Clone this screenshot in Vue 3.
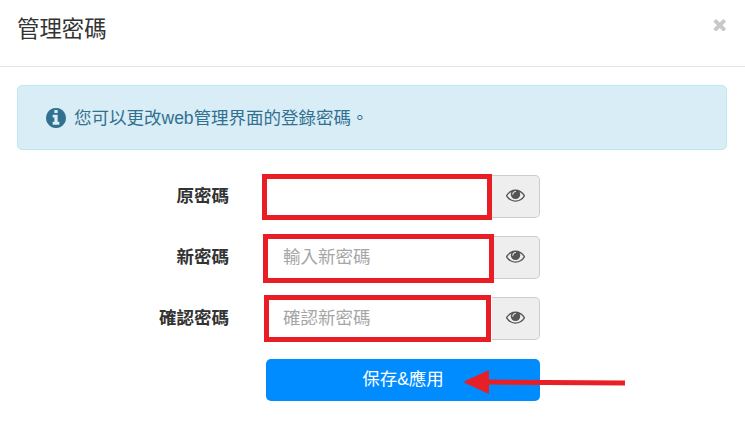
<script setup>
const rows = [
  { label: '原密碼', placeholder: '' },
  { label: '新密碼', placeholder: '輸入新密碼' },
  { label: '確認密碼', placeholder: '確認新密碼' }
]
const eye = 'M1664 960q-152-236-381-353 61 104 61 225 0 185-131.500 316.500t-316.500 131.500-316.500-131.500-131.500-316.500q0-121 61-225-229 117-381 353 133 205 333.500 326.500t434.500 121.500 434.500-121.500 333.500-326.500zm-720-384q0-20-14-34t-34-14q-125 0-214.500 89.500t-89.500 214.500q0 20 14 34t34 14 34-14 14-34q0-86 61-147t147-61q20 0 34-14t14-34zm848 384q0 34-20 69-140 230-376.500 368.500t-499.500 138.500-499.500-139-376.500-368q-20-35-20-69t20-69q140-229 376.500-368t499.500-139 499.500 139 376.500 368q20 35 20 69z'
const marks = [
  { name: 'm1' },
  { name: 'm2' },
  { name: 'm3' }
]
</script>

<template>
  <div class="modal">
    <header class="head">
      <h4 class="title">管理密碼</h4>
      <svg class="close" viewBox="254 254 1236 1272" aria-label="close">
        <path d="M1490 1322q0 40-28 68l-136 136q-28 28-68 28t-68-28l-294-294-294 294q-28 28-68 28t-68-28l-136-136q-28-28-28-68t28-68l294-294-294-294q-28-28-28-68t28-68l136-136q28-28 68-28t68 28l294 294 294-294q28-28 68-28t68 28l136 136q28 28 28 68t-28 68l-294 294 294 294q28 28 28 68z" />
      </svg>
    </header>

    <main class="body">
      <div class="alert">
        <svg class="info" viewBox="128 128 1536 1536">
          <path d="M1152 1376v-160q0-14-9-23t-23-9h-96v-512q0-14-9-23t-23-9h-320q-14 0-23 9t-9 23v160q0 14 9 23t23 9h96v320h-96q-14 0-23 9t-9 23v160q0 14 9 23t23 9h448q14 0 23-9t9-23zm-128-896v-160q0-14-9-23t-23-9h-192q-14 0-23 9t-9 23v160q0 14 9 23t23 9h192q14 0 23-9t9-23zm640 416q0 209-103 385.500t-279.500 279.500-385.500 103-385.500-103-279.500-279.500-103-385.500 103-385.500 279.500-279.500 385.500-103 385.500 103 279.500 279.500 103 385.500z" />
        </svg>
        <span class="alert-text">您可以更改web管理界面的登錄密碼。</span>
      </div>

      <form class="form" @submit.prevent>
        <div v-for="row in rows" :key="row.label" class="row">
          <label class="label">{{ row.label }}</label>
          <div class="group">
            <input class="input" type="password" :placeholder="row.placeholder" />
            <span class="addon">
              <svg class="eye" viewBox="0 256 1792 1280"><path :d="eye" /></svg>
            </span>
          </div>
        </div>
        <div class="row submit-row">
          <span class="label"></span>
          <button class="save" type="button">保存&amp;應用</button>
        </div>
      </form>
    </main>

    <div v-for="m in marks" :key="m.name" class="mark" :class="m.name"></div>
    <svg class="arrow" viewBox="0 0 165 26" width="165" height="26">
      <path d="M0 13 L26 1 V10.500 L162 11.500 V16.500 L26 15.500 V25 Z" />
    </svg>
  </div>
</template>

<style scoped>
.modal {
  position: relative;
  width: 745px;
  height: 432px;
  overflow: hidden;
  background: #fff;
  color: #333;
  font-family: "Liberation Sans", "Noto Sans CJK TC", sans-serif;
  font-size: 17.5px;
}
.head {
  height: 66px;
  border-bottom: 1px solid #e5e5e5;
  display: flex;
  justify-content: space-between;
  padding: 0 19px 0 17px;
  box-sizing: content-box;
}
.title {
  margin: 0;
  padding-top: 14px;
  font-size: 22.400px;
  line-height: 32px;
  font-weight: 400;
}
.close {
  margin-top: 18px;
  width: 13px;
  height: 13px;
  fill: #c9c9c9;
}
.body {
  padding: 18px 18px 0 17px;
}
.alert {
  height: 65px;
  box-sizing: border-box;
  display: flex;
  align-items: center;
  gap: 8px;
  padding-left: 28px;
  background: #d9edf7;
  border: 1px solid #bce8f1;
  border-radius: 5px;
  color: #31708f;
}
.alert-text {
  padding-bottom: 3px;
}
.info {
  width: 20px;
  height: 20px;
  fill: #31708f;
}
.form {
  margin-top: 25px;
  display: flex;
  flex-direction: column;
  gap: 18px;
}
.row {
  display: flex;
  align-items: center;
  gap: 37px;
}
.label {
  width: 212px;
  text-align: right;
  font-weight: 700;
  flex: none;
  padding-bottom: 4px;
}
.group {
  display: flex;
  width: 274px;
  height: 43px;
}
.input {
  flex: 1;
  min-width: 0;
  box-sizing: border-box;
  border: none;
  outline: none;
  padding: 0 0 0 17px;
  font: inherit;
  background: #fff;
}
.input::placeholder {
  color: #a6a6a6;
  opacity: 1;
}
.addon {
  width: 48px;
  flex: none;
  box-sizing: border-box;
  display: flex;
  align-items: center;
  justify-content: center;
  padding: 0 0 3px;
  background: #eee;
  border: 1px solid #ccc;
  border-left: none;
  border-radius: 0 5px 5px 0;
}
.eye {
  width: 19px;
  height: 14px;
  fill: #555;
}
.submit-row {
  margin-top: 1px;
}
.save {
  width: 274px;
  height: 42px;
  border: none;
  border-radius: 5px;
  background: #008cff;
  color: #fff;
  font: inherit;
  padding: 0 0 6px;
  text-align: center;
}
.mark {
  position: absolute;
  box-sizing: border-box;
  border: 5px solid #ea1c24;
}
.m1 {
  left: 262px;
  top: 174px;
  width: 230px;
  height: 46px;
}
.m2 {
  left: 263px;
  top: 234px;
  width: 231px;
  height: 49px;
}
.m3 {
  left: 264px;
  top: 295px;
  width: 227px;
  height: 47px;
}
.arrow {
  position: absolute;
  left: 463px;
  top: 369px;
  fill: #e81f26;
}
</style>
